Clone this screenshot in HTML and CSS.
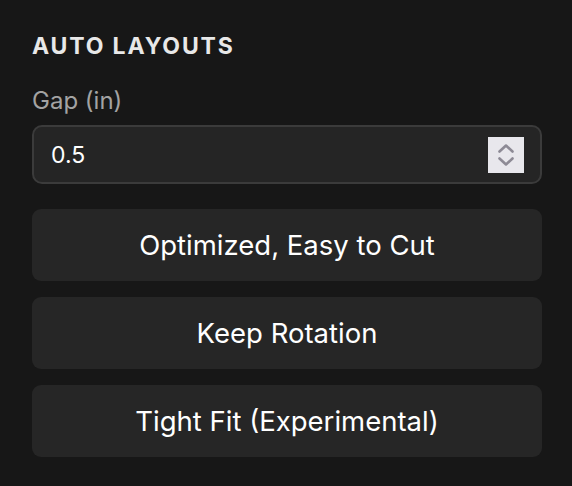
FILE: index.html
```html
<!DOCTYPE html>
<html>
<head>
<meta charset="utf-8">
<link rel="stylesheet" href="styles.css">
</head>
<body>
<div class="panel">
  <h2 class="title">AUTO LAYOUTS</h2>
  <label class="label">Gap (in)</label>
  <div class="input">
    <span class="value">0.5</span>
    <span class="spin">
      <svg width="36" height="36" viewBox="0 0 36 36">
        <rect width="36" height="36" fill="#e8e7ec"/>
        <path d="M11.5 14.5 L18 8.5 L24.5 14.5" fill="none" stroke="#8d8a95" stroke-width="2.6" stroke-linecap="round" stroke-linejoin="round"/>
        <path d="M11.5 21.5 L18 27.5 L24.5 21.5" fill="none" stroke="#8d8a95" stroke-width="2.6" stroke-linecap="round" stroke-linejoin="round"/>
      </svg>
    </span>
  </div>
  <div class="buttons">
    <button class="btn">Optimized, Easy to Cut</button>
    <button class="btn">Keep Rotation</button>
    <button class="btn">Tight Fit (Experimental)</button>
  </div>
</div>
</body>
</html>
```
FILE: styles.css
```css
html, body {
  margin: 0;
  padding: 0;
  background: #171717;
}
body {
  font-family: Inter, "Noto Sans", sans-serif;
  color: #f2f2f2;
}
.panel {
  width: 510px;
  padding: 31px 30px 0 32px;
  display: flex;
  flex-direction: column;
}
.title {
  margin: 0;
  font-size: 23px;
  font-weight: 700;
  letter-spacing: 1.85px;
  line-height: 30px;
  color: #e8e8e8;
}
.label {
  margin-top: 25px;
  font-size: 24px;
  line-height: 30px;
  color: #a3a3a3;
}
.input {
  margin-top: 9px;
  height: 55px;
  border: 2px solid #3b3b3b;
  border-radius: 10px;
  background: #252525;
  display: flex;
  align-items: center;
  justify-content: space-between;
  padding: 0 16px 0 17px;
}
.value {
  font-size: 23px;
  color: #ffffff;
}
.spin {
  display: flex;
  width: 36px;
  height: 36px;
}
.buttons {
  margin-top: 25px;
  display: flex;
  flex-direction: column;
  gap: 16px;
}
.btn {
  height: 72px;
  border: none;
  border-radius: 9px;
  background: #262626;
  color: #ffffff;
  font-family: Inter, "Noto Sans", sans-serif;
  font-size: 27.5px;
  padding: 0;
}
```
